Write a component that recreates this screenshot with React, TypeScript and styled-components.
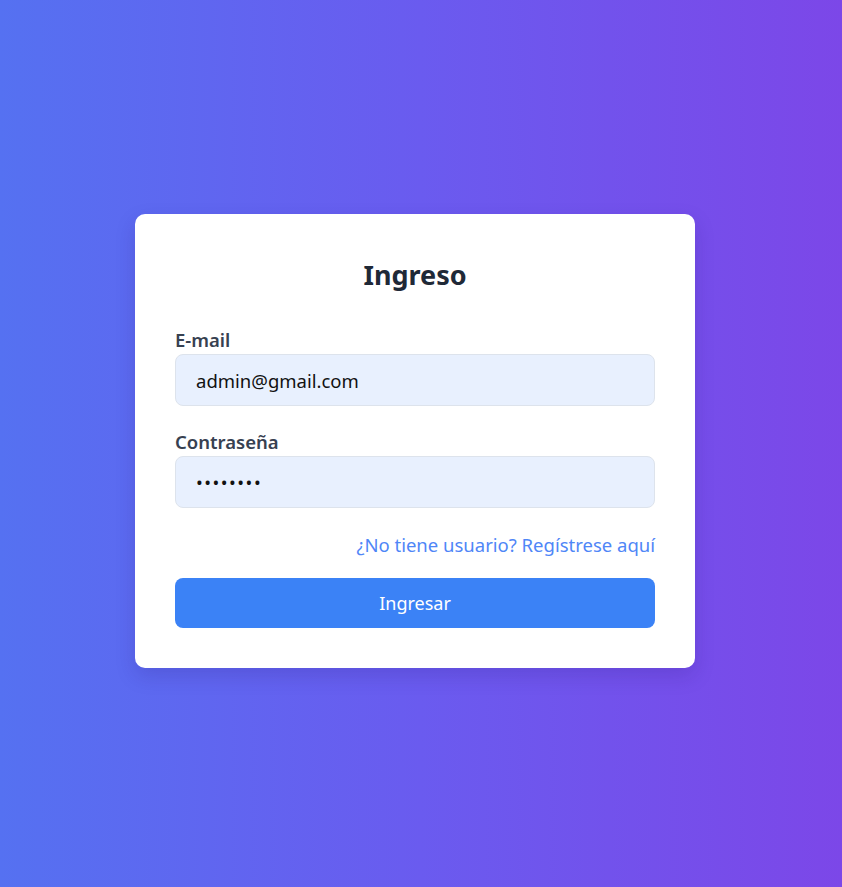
import React, { useState } from "react";
import styled, { createGlobalStyle } from "styled-components";

const GlobalStyle = createGlobalStyle`
  * {
    box-sizing: border-box;
  }

  html,
  body {
    margin: 0;
    padding: 0;
  }

  body {
    font-family: "Noto Sans", "Open Sans", sans-serif;
  }
`;

const Page = styled.div`
  min-height: 887px;
  display: flex;
  align-items: center;
  justify-content: center;
  padding: 0 12px 5px 0;
  background: linear-gradient(to right, #5571f1 0%, #6a5bef 50%, #7c47e8 100%);
`;

const Card = styled.form`
  width: 560px;
  padding: 40px;
  background: #ffffff;
  border-radius: 10px;
  box-shadow: 0 8px 20px rgba(40, 20, 120, 0.18);
  display: flex;
  flex-direction: column;
`;

const Title = styled.h2`
  margin: 4px 0 36px;
  font-size: 27px;
  line-height: 34px;
  font-weight: 700;
  text-align: center;
  color: #1f2937;
`;

const Field = styled.div`
  display: flex;
  flex-direction: column;

  & + & {
    margin-top: 24px;
  }
`;

const Label = styled.label`
  font-size: 18.5px;
  line-height: 24px;
  font-weight: 600;
  color: #374151;
  margin-bottom: 2px;
`;

const Input = styled.input`
  height: 52px;
  width: 100%;
  padding: 0 20px;
  font-family: inherit;
  font-size: 18.5px;
  color: #111111;
  background: #e8f0fe;
  border: 1px solid #dde3ec;
  border-radius: 8px;
  outline: none;

  &[type="password"] {
    font-size: 18px;
    letter-spacing: 1.5px;
  }
`;

const LinkRow = styled.div`
  display: flex;
  justify-content: flex-end;
  margin-top: 24px;
`;

const RegisterLink = styled.a`
  font-size: 18.5px;
  line-height: 26px;
  color: #4f86f7;
  text-decoration: none;
  cursor: pointer;
`;

const SubmitButton = styled.button`
  margin-top: 20px;
  height: 50px;
  width: 100%;
  border: none;
  border-radius: 8px;
  background: #3b82f6;
  color: #ffffff;
  font-family: inherit;
  font-size: 18px;
  cursor: pointer;
`;

export default function App() {
  const [email, setEmail] = useState("admin@gmail.com");
  const [password, setPassword] = useState("12345678");

  return (
    <>
      <GlobalStyle />
      <Page>
        <Card onSubmit={(event) => event.preventDefault()}>
          <Title>Ingreso</Title>
          <Field>
            <Label htmlFor="email">E-mail</Label>
            <Input id="email" type="email" value={email} onChange={(e) => setEmail(e.target.value)} />
          </Field>
          <Field>
            <Label htmlFor="password">Contraseña</Label>
            <Input id="password" type="password" value={password} onChange={(e) => setPassword(e.target.value)} />
          </Field>
          <LinkRow>
            <RegisterLink>¿No tiene usuario? Regístrese aquí</RegisterLink>
          </LinkRow>
          <SubmitButton type="submit">Ingresar</SubmitButton>
        </Card>
      </Page>
    </>
  );
}
